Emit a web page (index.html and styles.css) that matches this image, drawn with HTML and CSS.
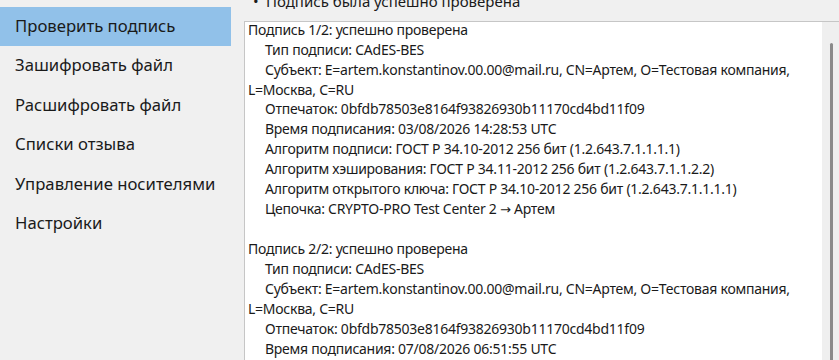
FILE: index.html
```html
<!DOCTYPE html>
<html lang="ru">
<head>
<meta charset="utf-8">
<link rel="stylesheet" href="styles.css">
</head>
<body>
<div class="app">
  <nav class="sidebar">
    <div class="item active">Проверить подпись</div>
    <div class="item">Зашифровать файл</div>
    <div class="item">Расшифровать файл</div>
    <div class="item">Списки отзыва</div>
    <div class="item">Управление носителями</div>
    <div class="item">Настройки</div>
  </nav>
  <main class="main">
    <div class="status"><span class="bullet">•</span>Подпись была успешно проверена</div>
    <div class="box">
      <div class="content">
        <div class="ln">Подпись 1/2: успешно проверена</div>
        <div class="ln ind">Тип подписи: CAdES-BES</div>
        <div class="ln ind">Субъект: E=artem.konstantinov.00.00@mail.ru, CN=Артем, O=Тестовая компания,</div>
        <div class="ln">L=Москва, C=RU</div>
        <div class="ln ind">Отпечаток: 0bfdb78503e8164f93826930b11170cd4bd11f09</div>
        <div class="ln ind">Время подписания: 03/08/2026 14:28:53 UTC</div>
        <div class="ln ind">Алгоритм подписи: ГОСТ Р 34.10-2012 256 бит (1.2.643.7.1.1.1.1)</div>
        <div class="ln ind">Алгоритм хэширования: ГОСТ Р 34.11-2012 256 бит (1.2.643.7.1.1.2.2)</div>
        <div class="ln ind">Алгоритм открытого ключа: ГОСТ Р 34.10-2012 256 бит (1.2.643.7.1.1.1.1)</div>
        <div class="ln ind">Цепочка: CRYPTO-PRO Test Center 2 <span class="arrow">→</span> Артем</div>
        <div class="ln">&nbsp;</div>
        <div class="ln">Подпись 2/2: успешно проверена</div>
        <div class="ln ind">Тип подписи: CAdES-BES</div>
        <div class="ln ind">Субъект: E=artem.konstantinov.00.00@mail.ru, CN=Артем, O=Тестовая компания,</div>
        <div class="ln">L=Москва, C=RU</div>
        <div class="ln ind">Отпечаток: 0bfdb78503e8164f93826930b11170cd4bd11f09</div>
        <div class="ln ind">Время подписания: 07/08/2026 06:51:55 UTC</div>
      </div>
      <div class="scrollbar"><div class="thumb"></div></div>
    </div>
  </main>
</div>
</body>
</html>
```
FILE: styles.css
```css
html, body {
  margin: 0;
  padding: 0;
  height: 100%;
  overflow: hidden;
  background: #f0f0f0;
  font-family: "Noto Sans", "Open Sans", sans-serif;
  color: #1a1a1a;
}
.app {
  display: flex;
  height: 360px;
}
.sidebar {
  width: 231px;
  flex: none;
  padding-top: 7px;
}
.item {
  height: 39.4px;
  line-height: 37.5px;
  padding-left: 15px;
  font-size: 16.7px;
  white-space: nowrap;
}
.item.active {
  background: #91c1e9;
}
.main {
  flex: none;
  width: 620px;
  padding-left: 13px;
}
.status {
  margin-top: -9px;
  height: 20px;
  line-height: 20px;
  font-size: 15px;
  white-space: nowrap;
  padding-left: 9px;
}
.bullet {
  display: inline-block;
  width: 13px;
}
.box {
  margin-top: 10px;
  height: 400px;
  background: #fff;
  border: 1px solid #c6c6c6;
  display: flex;
}
.content {
  width: 574px;
  flex: none;
  margin-top: -2px;
  padding: 0 0 0 3px;
  font-size: 14px;
  line-height: 19.85px;
  letter-spacing: -0.25px;
}
.ln {
  white-space: pre;
}
.ind {
  padding-left: 17px;
}
.arrow {
  font-family: "DejaVu Sans", sans-serif;
  font-size: 13px;
}
.scrollbar {
  width: 18px;
  flex: none;
  background: #efefef;
  padding-top: 21px;
  display: flex;
  justify-content: center;
}
.thumb {
  width: 3px;
  height: 400px;
  background: #8a8a8a;
  border-radius: 2px 2px 0 0;
}
```
